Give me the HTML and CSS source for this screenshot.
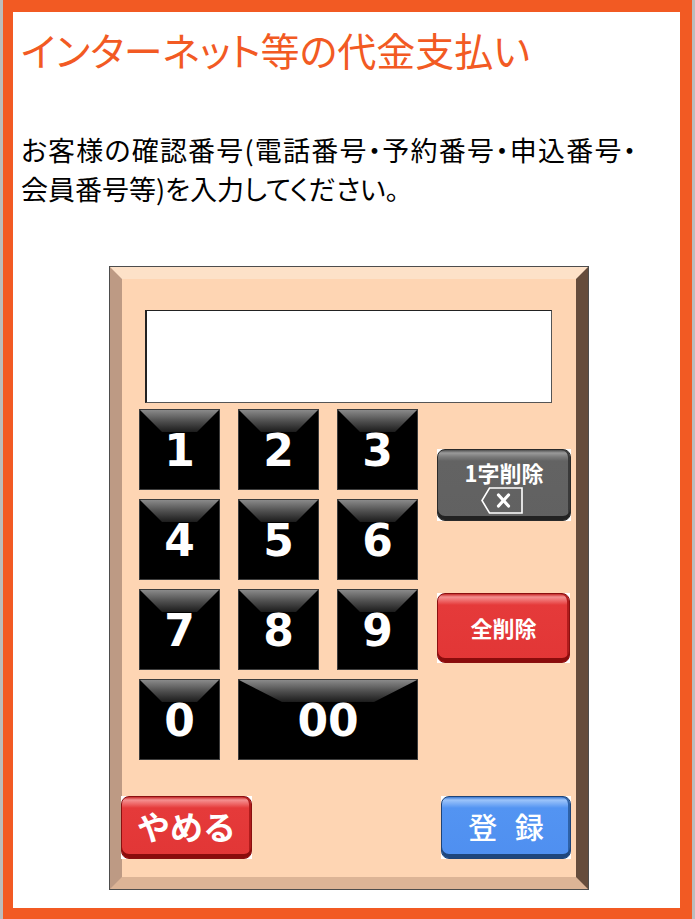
FILE: index.html
```html
<!DOCTYPE html>
<html lang="ja">
<head>
<meta charset="utf-8">
<title>インターネット等の代金支払い</title>
<link rel="stylesheet" href="styles.css">
</head>
<body>
<div class="frame">
  <h1 class="title">インターネット等の代金支払い</h1>
  <p class="lead">お客様の確認番号(電話番号・予約番号・申込番号・<br>会員番号等)を入力してください。</p>
  <div class="panel">
    <div class="bezel">
      <div class="display"></div>
      <div class="pad">
        <div class="keys">
          <div class="key">1</div>
          <div class="key">2</div>
          <div class="key">3</div>
          <div class="key">4</div>
          <div class="key">5</div>
          <div class="key">6</div>
          <div class="key">7</div>
          <div class="key">8</div>
          <div class="key">9</div>
          <div class="key">0</div>
          <div class="key wide">00</div>
        </div>
        <div class="side">
          <div class="btn-wrap bs-wrap">
            <div class="btn gray bs">
              <span class="bs-label">1字削除</span>
              <svg class="bs-icon" width="42" height="27" viewBox="0 0 42 27">
                <polygon points="8.5,1 41,1 41,26 8.5,26 1,13.5" fill="none" stroke="#fff" stroke-width="1.6"/>
                <line x1="17.5" y1="8" x2="27.5" y2="19" stroke="#fff" stroke-width="3.2" stroke-linecap="round"/>
                <line x1="27.5" y1="8" x2="17.5" y2="19" stroke="#fff" stroke-width="3.2" stroke-linecap="round"/>
              </svg>
            </div>
          </div>
          <div class="btn-wrap clr-wrap">
            <div class="btn red clr">全削除</div>
          </div>
        </div>
      </div>
      <div class="bottom">
        <div class="btn-wrap foot-wrap">
          <div class="btn red cancel">やめる</div>
        </div>
        <div class="btn-wrap foot-wrap ok-wrap">
          <div class="btn blue ok">登 録</div>
        </div>
      </div>
    </div>
  </div>
</div>
</body>
</html>
```
FILE: styles.css
```css
html, body {
  margin: 0;
  padding: 0;
}
body {
  width: 695px;
  height: 919px;
  overflow: hidden;
  background: #bcbcbc;
  font-family: "Noto Sans CJK JP", "Noto Sans", sans-serif;
}
.frame {
  box-sizing: border-box;
  margin-left: 3px;
  width: 689px;
  height: 919px;
  border-style: solid;
  border-color: #f25a23;
  border-width: 12px 12px 11px 10px;
  background: #fff;
}
.title {
  margin: 0;
  padding: 13px 0 0 8px;
  font-size: 39px;
  line-height: 48px;
  font-weight: 400;
  color: #f25a23;
  font-feature-settings: "palt";
}
.lead {
  margin: 57px 0 0 8px;
  font-size: 27px;
  line-height: 39px;
  color: #000;
  font-feature-settings: "palt";
}
.lead::first-line {
  letter-spacing: 1.2px;
}
.panel {
  box-sizing: border-box;
  margin: 58px 0 0 96px;
  width: 480px;
  height: 624px;
  border: 1px solid #4d4d4d;
}
.bezel {
  box-sizing: border-box;
  height: 100%;
  border-style: solid;
  border-width: 12px;
  border-color: #fde1c8 #654c3c #dcb496 #bd9a84;
  background: #fed5b3;
}
.display {
  box-sizing: border-box;
  margin: 31px 0 0 23px;
  width: 407px;
  height: 93px;
  background: #fff;
  border: 1px solid #555;
  border-top-color: #222;
  border-left: 2px solid #222;
}
.pad {
  display: flex;
  margin: 6px 0 0 17px;
}
.keys {
  display: grid;
  grid-template-columns: repeat(3, 81px);
  grid-auto-rows: 81px;
  gap: 9px 18px;
}
.key {
  position: relative;
  box-sizing: border-box;
  background: #000;
  border: 1px solid #3c3c3c;
  color: #fff;
  font-family: "DejaVu Sans", Verdana, sans-serif;
  font-weight: 700;
  font-size: 44px;
  display: flex;
  align-items: center;
  justify-content: center;
  padding-top: 2px;
}
.key::before {
  content: "";
  position: absolute;
  left: 0;
  right: 0;
  top: 0;
  height: 22px;
  background: linear-gradient(#8a8a8a, #555 45%, #1c1c1c);
  clip-path: polygon(0 0, 100% 0, calc(100% - 22px) 100%, 22px 100%);
}
.key.wide {
  grid-column: span 2;
}
.key.wide::before {
  clip-path: polygon(0 0, 100% 0, calc(100% - 43px) 100%, 43px 100%);
}
.side {
  margin-left: 19px;
  padding-top: 40px;
  display: flex;
  flex-direction: column;
  gap: 72px;
}
.btn-wrap {
  background: #fff;
  display: flex;
}
.btn {
  flex: 1;
  box-sizing: border-box;
  border-radius: 8px;
  color: #fff;
  font-weight: 700;
  display: flex;
  align-items: center;
  justify-content: center;
}
.gray {
  border: 1px solid #2a2a2a;
  background: linear-gradient(#505050 0, #9a9a9a 3px, #7a7a7a 7px, #636363 11px, #616161 100%);
  box-shadow: inset 0 -4px 0 #222, inset -2px 0 0 #3a3a3a;
}
.red {
  border: 1px solid #8a1010;
  background: linear-gradient(#c42a2a 0, #f49090 3px, #ee6666 7px, #e53a3a 11px, #e23636 100%);
  box-shadow: inset 0 -4px 0 #8a0c0c, inset -2px 0 0 #b01c1c;
}
.blue {
  border: 1px solid #1e4478;
  background: linear-gradient(#3c78d0 0, #9cc4fa 3px, #78acf6 7px, #5394f2 11px, #4f8ff0 100%);
  box-shadow: inset 0 -4px 0 #1f467c, inset -2px 0 0 #2e62a8;
}
.bs-wrap {
  width: 134px;
  height: 72px;
}
.bs {
  flex-direction: column;
  justify-content: flex-start;
  padding-top: 9px;
}
.bs-label {
  font-size: 22px;
  line-height: 27px;
}
.bs-icon {
  display: block;
  margin: 1px 0 0 -4px;
}
.clr-wrap {
  width: 133px;
  height: 70px;
}
.clr {
  font-size: 22px;
  padding-bottom: 2px;
}
.bottom {
  display: flex;
  justify-content: space-between;
  margin: 36px 5px 0 -1px;
}
.foot-wrap {
  width: 131px;
  height: 63px;
}
.ok-wrap {
  width: 130px;
}
.cancel {
  font-size: 33px;
  padding-bottom: 3px;
}
.ok {
  font-size: 29px;
  font-weight: 500;
  word-spacing: 11px;
  padding-bottom: 3px;
}
```
